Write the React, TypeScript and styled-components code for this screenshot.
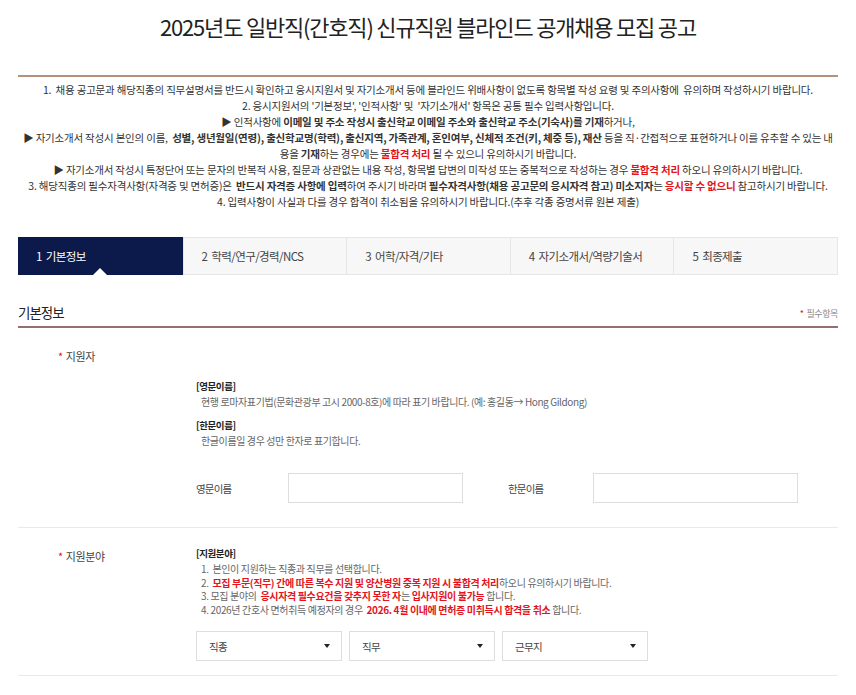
import React from "react";
import styled, { createGlobalStyle } from "styled-components";

const GlobalStyle = createGlobalStyle`
  html, body {
    margin: 0;
    padding: 0;
    background: #fff;
  }
  body {
    font-family: "Noto Sans CJK KR", "Noto Sans", sans-serif;
    color: #333;
  }
  * {
    box-sizing: border-box;
  }
`;

const RED = "#e3141c";

const Page = styled.div`
  width: 856px;
  padding: 0 18px 20px;
`;

const Header = styled.header`
  padding-top: 12px;
  height: 77px;
  border-bottom: 2px solid #b48f79;
`;

const Title = styled.h1`
  margin: 0;
  text-align: center;
  font-size: 22px;
  line-height: 28px;
  font-weight: 400;
  letter-spacing: -1.2px;
  color: #222;
`;

const Notice = styled.div`
  padding-top: 5px;
  text-align: center;
  font-size: 10.5px;
  line-height: 16px;
  letter-spacing: -0.2px;
  color: #333;
`;

const NoticeLine = styled.p`
  margin: 0;
  white-space: nowrap;
`;

const B = styled.b`
  font-weight: 700;
`;

const Red = styled.b`
  font-weight: 700;
  color: ${RED};
`;

const Tabs = styled.nav`
  margin-top: 27px;
  display: grid;
  grid-template-columns: repeat(5, 1fr);
  height: 38px;
  border: 1px solid #e6e6e6;
  background: #f7f7f7;
`;

const Tab = styled.div<{ $active?: boolean }>`
  position: relative;
  display: flex;
  align-items: center;
  padding-left: 18px;
  font-size: 11.5px;
  letter-spacing: -0.6px;
  word-spacing: 2px;
  color: ${(p) => (p.$active ? "#fff" : "#444")};
  background: ${(p) => (p.$active ? "#0b1a4b" : "transparent")};
  border-left: 1px solid ${(p) => (p.$active ? "#0b1a4b" : "#e6e6e6")};
  margin: ${(p) => (p.$active ? "-1px 0 -1px -1px" : "0")};

  &:first-child {
    border-left: none;
  }
`;

const TabArrow = styled.span`
  position: absolute;
  bottom: 0;
  left: 50%;
  transform: translateX(-50%);
  width: 0;
  height: 0;
  border-left: 7px solid transparent;
  border-right: 7px solid transparent;
  border-bottom: 7px solid #fff;
`;

const SectionHead = styled.div`
  height: 53px;
  display: flex;
  justify-content: space-between;
  align-items: flex-end;
  padding-bottom: 5px;
  border-bottom: 2px solid #93706f;
`;

const SectionTitle = styled.h2`
  margin: 0;
  font-size: 13.5px;
  line-height: 18px;
  font-weight: 400;
  letter-spacing: -1px;
  color: #222;
`;

const Required = styled.span`
  font-size: 9px;
  line-height: 12px;
  letter-spacing: -0.4px;
  color: #888;
  padding-bottom: 1px;
`;

const Star = styled.span`
  color: ${RED};
  margin-right: 3px;
`;

const Row = styled.section<{ $bottom: number }>`
  display: grid;
  grid-template-columns: 178px 1fr;
  padding-top: 18px;
  padding-bottom: ${(p) => p.$bottom}px;
  border-bottom: 1px solid #e9e9e9;
`;

const RowLabel = styled.div`
  padding-left: 40px;
  padding-top: 2px;
  font-size: 11px;
  line-height: 16px;
  letter-spacing: -0.4px;
  color: #444;
`;

const RowBody = styled.div<{ $top?: number }>`
  padding-top: ${(p) => p.$top ?? 0}px;
`;

const GuideTitle = styled.div<{ $gap?: number }>`
  margin-top: ${(p) => p.$gap ?? 0}px;
  font-size: 9.5px;
  line-height: 14px;
  font-weight: 700;
  letter-spacing: -0.4px;
  color: #222;
`;

const GuideText = styled.div`
  padding-left: 5px;
  font-size: 10px;
  line-height: 17px;
  letter-spacing: -0.4px;
  color: #666;
  white-space: nowrap;
`;

const GuideList = styled.ol`
  margin: 2px 0 0;
  padding: 0 0 0 5px;
  list-style: none;
  font-size: 10px;
  line-height: 13.5px;
  letter-spacing: -0.35px;
  color: #666;
  white-space: nowrap;
`;

const FieldRow = styled.div`
  margin-top: 24px;
  display: flex;
  align-items: center;
`;

const FieldLabel = styled.label<{ $w: number }>`
  width: ${(p) => p.$w}px;
  font-size: 10.5px;
  letter-spacing: -0.8px;
  color: #444;
`;

const TextInput = styled.input<{ $w: number; $mr?: number }>`
  width: ${(p) => p.$w}px;
  height: 30px;
  margin-right: ${(p) => p.$mr ?? 0}px;
  border: 1px solid #dedede;
  background: #fff;
  outline: none;
  font: inherit;
`;

const Selects = styled.div`
  margin-top: 15px;
  display: flex;
  gap: 7px;
`;

const Select = styled.div`
  position: relative;
  width: 146px;
  height: 30px;
  border: 1px solid #dedede;
  display: flex;
  align-items: center;
  padding-left: 12px;
  font-size: 10.5px;
  letter-spacing: -0.6px;
  color: #444;
  background: #fff;
`;

const Caret = styled.span`
  position: absolute;
  right: 11px;
  top: 50%;
  margin-top: -2px;
  width: 0;
  height: 0;
  border-left: 3.5px solid transparent;
  border-right: 3.5px solid transparent;
  border-top: 4px solid #222;
`;

const tabs = ["1 기본정보", "2 학력/연구/경력/NCS", "3 어학/자격/기타", "4 자기소개서/역량기술서", "5 최종제출"];

export default function App() {
  return (
    <>
      <GlobalStyle />
      <Page>
        <Header>
          <Title>2025년도 일반직(간호직) 신규직원 블라인드 공개채용 모집 공고</Title>
        </Header>

        <Notice>
          <NoticeLine>
            1.&nbsp; 채용 공고문과 해당직종의 직무설명서를 반드시 확인하고 응시지원서 및 자기소개서 등에 블라인드 위배사항이 없도록 항목별 작성 요령 및 주의사항에&nbsp; 유의하며 작성하시기 바랍니다.
          </NoticeLine>
          <NoticeLine>
            2. 응시지원서의 '기본정보', '인적사항' 및&nbsp; '자기소개서' 항목은 공통 필수 입력사항입니다.
          </NoticeLine>
          <NoticeLine>
            ▶ 인적사항에 <B>이메일 및 주소 작성시 출신학교 이메일 주소와 출신학교 주소(기숙사)를 기재</B>하거나,
          </NoticeLine>
          <NoticeLine>
            ▶ 자기소개서 작성시 본인의 이름,&nbsp; <B>성별, 생년월일(연령), 출신학교명(학력), 출신지역, 가족관계, 혼인여부, 신체적 조건(키, 체중 등), 재산</B> 등을 직·간접적으로 표현하거나 이를 유추할 수 있는 내
          </NoticeLine>
          <NoticeLine>
            용을 <B>기재</B>하는 경우에는 <Red>불합격 처리</Red> 될 수 있으니 유의하시기 바랍니다.
          </NoticeLine>
          <NoticeLine>
            ▶ 자기소개서 작성시 특정단어 또는 문자의 반복적 사용, 질문과 상관없는 내용 작성, 항목별 답변의 미작성 또는 중복적으로 작성하는 경우 <Red>불합격 처리</Red> 하오니 유의하시기 바랍니다.
          </NoticeLine>
          <NoticeLine>
            3. 해당직종의 필수자격사항(자격증 및 면허증)은&nbsp; <B>반드시 자격증 사항에 입력</B>하여 주시기 바라며 <B>필수자격사항(채용 공고문의 응시자격 참고) 미소지자</B>는 <Red>응시할 수 없으니</Red> 참고하시기 바랍니다.
          </NoticeLine>
          <NoticeLine>
            4. 입력사항이 사실과 다를 경우 합격이 취소됨을 유의하시기 바랍니다.(추후 각종 증명서류 원본 제출)
          </NoticeLine>
        </Notice>

        <Tabs>
          {tabs.map((t, i) => (
            <Tab key={t} $active={i === 0}>
              {t}
              {i === 0 && <TabArrow />}
            </Tab>
          ))}
        </Tabs>

        <SectionHead>
          <SectionTitle>기본정보</SectionTitle>
          <Required>
            <Star>*</Star>필수항목
          </Required>
        </SectionHead>

        <Row $bottom={24}>
          <RowLabel>
            <Star>*</Star>지원자
          </RowLabel>
          <RowBody $top={33}>
            <GuideTitle>[영문이름]</GuideTitle>
            <GuideText>현행 로마자표기법(문화관광부 고시 2000-8호)에 따라 표기 바랍니다. (예: 홍길동→ Hong Gildong)</GuideText>
            <GuideTitle $gap={8}>[한문이름]</GuideTitle>
            <GuideText>한글이름일 경우 성만 한자로 표기합니다.</GuideText>
            <FieldRow>
              <FieldLabel $w={92}>영문이름</FieldLabel>
              <TextInput $w={175} $mr={45} />
              <FieldLabel $w={85}>한문이름</FieldLabel>
              <TextInput $w={205} />
            </FieldRow>
          </RowBody>
        </Row>

        <Row $bottom={14}>
          <RowLabel>
            <Star>*</Star>지원분야
          </RowLabel>
          <RowBody>
            <GuideTitle>[지원분야]</GuideTitle>
            <GuideList>
              <li>1.&nbsp; 본인이 지원하는 직종과 직무를 선택합니다.</li>
              <li>
                2.&nbsp; <Red>모집 부문(직무) 간에 따른 복수 지원 및 양산병원 중복 지원 시 불합격 처리</Red>하오니 유의하시기 바랍니다.
              </li>
              <li>
                3. 모집 분야의&nbsp; <Red>응시자격 필수요건을 갖추지 못한 자</Red>는 <Red>입사지원이 불가능</Red> 합니다.
              </li>
              <li>
                4. 2026년 간호사 면허취득 예정자의 경우&nbsp; <Red>2026. 4월 이내에 면허증 미취득시 합격을 취소</Red> 합니다.
              </li>
            </GuideList>
            <Selects>
              {["직종", "직무", "근무지"].map((s) => (
                <Select key={s}>
                  {s}
                  <Caret />
                </Select>
              ))}
            </Selects>
          </RowBody>
        </Row>
      </Page>
    </>
  );
}
